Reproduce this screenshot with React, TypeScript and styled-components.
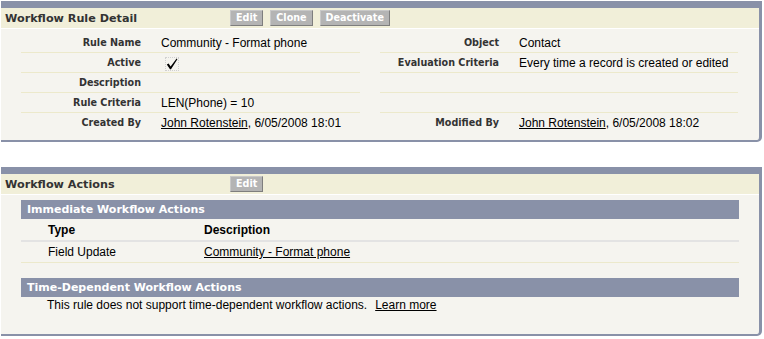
import React from 'react'
import styled, { createGlobalStyle } from 'styled-components'

const GlobalStyle = createGlobalStyle`
	body {
		margin: 0;
		background: #ffffff;
		font-family: 'Liberation Sans', Arial, sans-serif;
		font-size: 12px;
		color: #000;
	}
`

const Page = styled.div`
	padding: 1px 0 0 1px;
	width: 761px;
	display: flex;
	flex-direction: column;
	gap: 25px;
`

const Block = styled.div`
	background: #f5f4ef;
	border-top: 7px solid #8991a8;
	border-right: 3px solid #8991a8;
	border-bottom: 2px solid #8991a8;
	border-bottom-right-radius: 5px;
`

const BlockHeader = styled.div`
	display: flex;
	align-items: center;
	height: 20px;
	background: #f1efd9;
	border-bottom: 1px solid #ffffff;
`

const BlockTitle = styled.h2`
	margin: 0;
	width: 229px;
	padding-left: 4px;
	box-sizing: border-box;
	font-family: 'DejaVu Sans', Verdana, sans-serif;
	font-size: 11.2px;
	font-weight: bold;
	color: #333;
`

const Buttons = styled.div`
	display: flex;
	gap: 7px;
`

const Button = styled.button`
	height: 16px;
	padding: 0 5px;
	margin: 0;
	background: #b4b4b4;
	border: 1px solid;
	border-color: #c8c8c8 #7e7e7e #7e7e7e #c8c8c8;
	font-family: 'DejaVu Sans', Verdana, sans-serif;
	font-size: 9.6px;
	font-weight: bold;
	line-height: 14px;
	color: #ffffff;
	cursor: pointer;
`

const DetailBody = styled.div`
	padding: 4px 20px 7px 20px;
`

const DetailGrid = styled.div`
	display: grid;
	grid-template-columns: 130px 209px 20px 129px 229px;
`

const Cell = styled.div<{ $last?: boolean; $label?: boolean }>`
	height: 19px;
	display: flex;
	align-items: center;
	border-bottom: 1px solid ${(p) => (p.$last ? 'transparent' : '#ece9cb')};
	justify-content: ${(p) => (p.$label ? 'flex-end' : 'flex-start')};
	padding: ${(p) => (p.$label ? '0 10px 0 0' : '0 0 0 10px')};
	font-family: ${(p) => (p.$label ? "'DejaVu Sans', Verdana, sans-serif" : "'Liberation Sans', Arial, sans-serif")};
	font-size: ${(p) => (p.$label ? '9.6px' : '12px')};
	font-weight: ${(p) => (p.$label ? 'bold' : 'normal')};
	color: ${(p) => (p.$label ? '#333' : '#000')};
	white-space: nowrap;
	overflow: hidden;
`

const Spacer = styled.div``

const Link = styled.a`
	color: #000;
	text-decoration: underline;
	cursor: pointer;
`

const CheckBox = styled.span`
	display: inline-flex;
	align-items: center;
	justify-content: center;
	width: 12px;
	height: 12px;
	margin: 2px 0 0 4px;
	border: 1px dotted #d0d0d0;
`

const ActionsBody = styled.div`
	padding: 5px 20px 22px 20px;
`

const SubHeader = styled.h3`
	margin: 0;
	height: 19px;
	display: flex;
	align-items: center;
	padding-left: 6px;
	background: #8991a8;
	color: #ffffff;
	font-family: 'DejaVu Sans', Verdana, sans-serif;
	font-size: 11px;
	font-weight: bold;
`

const ActionTable = styled.div`
	display: grid;
	grid-template-columns: 183px 1fr;
	margin-bottom: 15px;
`

const HeadCell = styled.div`
	height: 21px;
	display: flex;
	align-items: center;
	padding-left: 27px;
	border-bottom: 2px solid #e3e3e3;
	font-weight: bold;
	&:nth-child(2n) {
		padding-left: 0;
	}
`

const DataCell = styled.div`
	height: 20px;
	display: flex;
	align-items: center;
	padding-left: 27px;
	border-bottom: 1px solid #ece9cb;
	&:nth-child(2n) {
		padding-left: 0;
	}
`

const Note = styled.div`
	height: 15px;
	display: flex;
	align-items: center;
	padding-left: 26px;
	gap: 8px;
`

const Check = () => (
	<CheckBox>
		<svg width="12" height="12" viewBox="0 0 12 12">
			<path d="M0.8 6.4 L2.6 5.6 L4.6 8.6 L10.6 0.6 L11.4 1.2 L5 11.2 L4 11.2 Z" fill="#000" />
		</svg>
	</CheckBox>
)

const details: [string, React.ReactNode, string, React.ReactNode][] = [
	['Rule Name', 'Community - Format phone', 'Object', 'Contact'],
	['Active', <Check key="c" />, 'Evaluation Criteria', 'Every time a record is created or edited'],
	['Description', '', '', ''],
	['Rule Criteria', 'LEN(Phone) = 10', '', ''],
	[
		'Created By',
		<span key="cb">
			<Link>John Rotenstein</Link>, 6/05/2008 18:01
		</span>,
		'Modified By',
		<span key="mb">
			<Link>John Rotenstein</Link>, 6/05/2008 18:02
		</span>,
	],
]

export default function App() {
	return (
		<>
			<GlobalStyle />
			<Page>
				<Block>
					<BlockHeader>
						<BlockTitle>Workflow Rule Detail</BlockTitle>
						<Buttons>
							<Button>Edit</Button>
							<Button>Clone</Button>
							<Button>Deactivate</Button>
						</Buttons>
					</BlockHeader>
					<DetailBody>
						<DetailGrid>
							{details.map(([l1, v1, l2, v2], i) => {
								const last = i === details.length - 1
								return (
									<React.Fragment key={i}>
										<Cell $label $last={last}>{l1}</Cell>
										<Cell $last={last}>{v1}</Cell>
										<Spacer />
										<Cell $label $last={last}>{l2}</Cell>
										<Cell $last={last}>{v2}</Cell>
									</React.Fragment>
								)
							})}
						</DetailGrid>
					</DetailBody>
				</Block>

				<Block>
					<BlockHeader>
						<BlockTitle>Workflow Actions</BlockTitle>
						<Buttons>
							<Button>Edit</Button>
						</Buttons>
					</BlockHeader>
					<ActionsBody>
						<SubHeader>Immediate Workflow Actions</SubHeader>
						<ActionTable>
							<HeadCell>Type</HeadCell>
							<HeadCell>Description</HeadCell>
							<DataCell>Field Update</DataCell>
							<DataCell>
								<Link>Community - Format phone</Link>
							</DataCell>
						</ActionTable>
						<SubHeader>Time-Dependent Workflow Actions</SubHeader>
						<Note>
							This rule does not support time-dependent workflow actions.
							<Link>Learn more</Link>
						</Note>
					</ActionsBody>
				</Block>
			</Page>
		</>
	)
}
